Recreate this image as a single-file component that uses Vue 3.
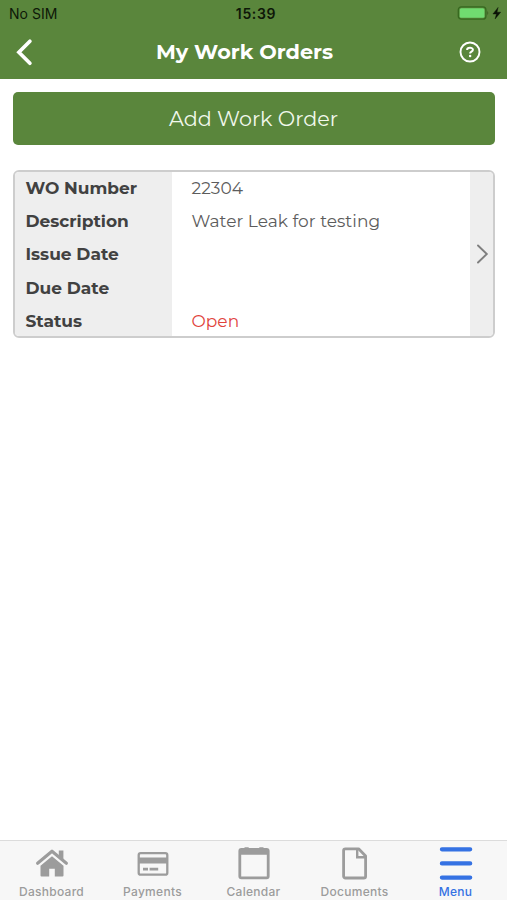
<script setup>
const rows = [
  { label: 'WO Number', value: '22304', id: 'number' },
  { label: 'Description', value: 'Water Leak for testing', id: 'description' },
  { label: 'Issue Date', value: '', id: 'issue' },
  { label: 'Due Date', value: '', id: 'due' },
  { label: 'Status', value: 'Open', id: 'status' },
]
</script>

<template>
  <div class="screen">
    <header class="header">
      <div class="statusbar">
        <span class="carrier">No SIM</span>
        <span class="clock">15:39</span>
        <svg class="battery" width="46" height="16" viewBox="0 0 46 16">
          <rect x="1.3" y="1.8" width="27.6" height="12.4" rx="3" fill="none" stroke="#36691f" stroke-width="1.3" />
          <rect x="2.7" y="3.2" width="24.8" height="9.6" rx="1.6" fill="#70dc70" />
          <path d="M30.4 5.8q1.8 2.2 0 4.4z" fill="#36591f" />
          <path d="M41.1 2.4 35.9 9h3.5l-1.3 5 5.6-6.8H40z" fill="#0b1206" stroke="#0b1206" stroke-width=".4" />
        </svg>
      </div>
      <div class="titlebar">
        <svg class="back" width="20" height="30" viewBox="0 0 20 30">
          <path d="M14.9 4.3 3.9 15.3l11 11" fill="none" stroke="#fff" stroke-width="3.7" stroke-linejoin="miter" stroke-linecap="round" />
        </svg>
        <h1 class="title">My Work Orders</h1>
        <svg class="help" width="22" height="22" viewBox="0 0 22 22">
          <circle cx="11" cy="11" r="9.5" fill="none" stroke="#fff" stroke-width="1.9" />
          <path d="M8.1 9C8.1 6.1 13.9 6 13.9 8.8c0 1.9-2.8 1.8-2.8 3.7" fill="none" stroke="#fff" stroke-width="2" />
          <circle cx="11.1" cy="15.1" r="1.25" fill="#fff" />
        </svg>
      </div>
    </header>

    <main class="content">
      <button class="add">Add Work Order</button>
      <section class="card">
        <dl class="rows">
          <div v-for="row in rows" :key="row.id" class="row">
            <dt>{{ row.label }}</dt>
            <dd :class="'value-' + row.id">{{ row.value }}</dd>
          </div>
        </dl>
        <div class="more">
          <svg width="13" height="20" viewBox="0 0 13 20">
            <path d="M2 1.5 10.8 10 2 18.5" fill="none" stroke="#7f7f7f" stroke-width="1.9" stroke-linecap="round" />
          </svg>
        </div>
      </section>
    </main>

    <nav class="tabs">
      <div class="tab">
        <svg width="34" height="34" viewBox="0 0 34 34">
          <path d="M2.6 17.3 17 5.2l14.4 12.1" fill="none" stroke="#9c9c9c" stroke-width="3.1" stroke-linecap="round" stroke-linejoin="round" />
          <path d="M23.8 4.4h4.6v10l-4.6-4z" fill="#9c9c9c" />
          <path d="M5.5 19.7 17 10.2l11.5 9.5V29.6a1 1 0 0 1-1 1H19.8v-7.8h-5.6v7.8H6.5a1 1 0 0 1-1-1z" fill="#9c9c9c" />
        </svg>
        <span>Dashboard</span>
      </div>
      <div class="tab">
        <svg width="34" height="34" viewBox="0 0 34 34">
          <rect x="2.7" y="7.1" width="28.6" height="21.6" rx="2" fill="none" stroke="#9c9c9c" stroke-width="2.3" />
          <path d="M3 11.5h28v6H3zM7 21.7h5v2.8H7zm6.6 0h8.6v2.8h-8.6z" fill="#9c9c9c" />
        </svg>
        <span>Payments</span>
      </div>
      <div class="tab">
        <svg width="34" height="34" viewBox="0 0 34 34">
          <rect x="2.8" y="3.5" width="28.4" height="28.4" rx="1.6" fill="none" stroke="#9c9c9c" stroke-width="2.8" />
          <path d="M3 3.4h28v5.4H3zM7.5 1.2h4.2V4H7.5zm14.8 0h4.2V4h-4.2z" fill="#9c9c9c" />
        </svg>
        <span>Calendar</span>
      </div>
      <div class="tab">
        <svg width="34" height="34" viewBox="0 0 34 34">
          <path d="M7.4 2.8h13.2l7 7.2v20.2a1.8 1.8 0 0 1-1.8 1.8H7.4a1.8 1.8 0 0 1-1.8-1.8V4.6a1.8 1.8 0 0 1 1.8-1.8z" fill="none" stroke="#9c9c9c" stroke-width="2.8" stroke-linejoin="round" />
          <path d="M19.2 3.5v7.7h8" fill="none" stroke="#9c9c9c" stroke-width="2.4" />
        </svg>
        <span>Documents</span>
      </div>
      <div class="tab active">
        <svg width="34" height="34" viewBox="0 0 34 34">
          <path d="M2.9 3.3h28.3M2.9 17.4h28.3M2.9 31.6h28.3" stroke="#3572e3" stroke-width="4.2" stroke-linecap="round" />
        </svg>
        <span>Menu</span>
      </div>
    </nav>
  </div>
</template>

<style>
body { margin: 0; background: #fff; }
</style>

<style scoped>
.screen { width: 507px; height: 900px; display: flex; flex-direction: column; background: #fff; font-family: Montserrat, Inter, "Liberation Sans", sans-serif; overflow: hidden; }
.header { height: 79px; background: #5a863c; flex: none; }
.statusbar { height: 27px; padding: 0 4px 1px 9px; display: grid; grid-template-columns: 1fr auto 1fr; align-items: center; font-family: Inter, sans-serif; font-size: 14px; color: #0e1808; box-sizing: border-box; }
.carrier { letter-spacing: .05px; }
.clock { font-weight: 600; letter-spacing: .65px; }
.battery { justify-self: end; }
.titlebar { height: 50px; display: grid; grid-template-columns: 30px 1fr 52px; align-items: center; padding: 0 11px 0 15px; }
.title { margin: 0; text-align: center; font-size: 20.8px; line-height: 28px; font-weight: 700; color: #fff; white-space: nowrap; }
.help { justify-self: end; margin-right: 15px; }
.content { flex: 1; padding: 13px 12px 0 13px; display: flex; flex-direction: column; gap: 25px; }
.add { height: 53px; flex: none; border: 0; border-radius: 5px; background: #5a863c; color: #f1f8ec; font: 400 20.7px Montserrat, Inter, sans-serif; padding: 0 1px 0 0; }
.card { height: 168px; flex: none; box-sizing: border-box; border: 2px solid #cdcdcd; border-radius: 6px; display: flex; overflow: hidden; background: #fff; }
.rows { margin: 0; flex: 1; display: grid; grid-template-rows: repeat(5, 33.2px); }
.row { display: grid; grid-template-columns: 157px 1fr; line-height: 33.2px; font-size: 17px; }
dt { background: #eee; padding-left: 10.5px; font-weight: 700; color: #414141; white-space: nowrap; }
dd { margin: 0; padding-left: 19.5px; color: #5c5c5c; white-space: nowrap; letter-spacing: .03px; }
.value-status { color: #e1433c; }
.more { width: 23px; background: #eee; display: flex; align-items: center; justify-content: center; padding-left: 2px; box-sizing: border-box; }
.tabs { height: 60px; flex: none; box-sizing: border-box; border-top: 1px solid #dcdcdc; background: #f7f7f7; display: grid; grid-template-columns: repeat(5, 101px); padding-left: 1px; padding-top: 5px; }
.tab { display: flex; flex-direction: column; align-items: center; color: #9c9c9c; font: 500 12px/16px Inter, sans-serif; letter-spacing: .28px; gap: 4px; }
.active { color: #3572e3; }
</style>
